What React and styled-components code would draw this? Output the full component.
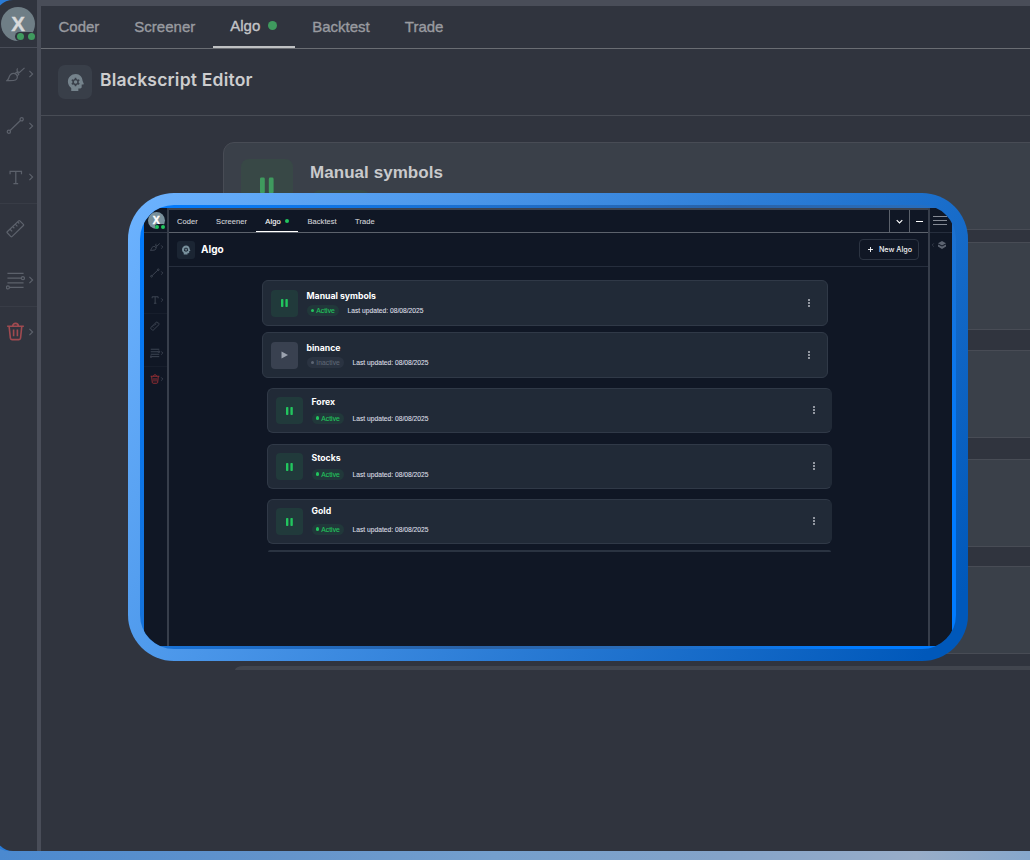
import React from 'react';
import styled, { createGlobalStyle, css } from 'styled-components';

const tabs = ['Coder', 'Screener', 'Algo', 'Backtest', 'Trade'];

const algos = [
  { name: 'Manual symbols', active: true, top: 0, nameTop: 10 },
  { name: 'binance', active: false, top: 6.5, nameTop: 10 },
  { name: 'Forex', active: true, shifted: true, top: 10, nameTop: 8.5 },
  { name: 'Stocks', active: true, shifted: true, top: 10.5, nameTop: 8.5 },
  { name: 'Gold', active: true, shifted: true, top: 9.5, nameTop: 6.5 },
];

const backCards = [12, 20, 21, 19];

const BrushIcon = () => (
  <svg viewBox="0 0 20 20">
    <path d="M.8 16.500C3.500 15 2.500 13 4.300 10.700 6 8.500 9 8.300 10.800 10c1.800 1.800 1.400 4.700-.8 5.800-2.300 1.100-5.700.7-9.200.7z" />
    <path d="M9 9.200 11.300 7.600l2.200 2-1.800 2.200M12.200 3.500c-1.300 1.800-.3 4.500 2 4.300L19.500 3" />
  </svg>
);
const LineIcon = () => (
  <svg viewBox="0 0 20 20">
    <circle cx="16.500" cy="3.500" r="1.700" />
    <circle cx="3" cy="16.500" r="1.700" />
    <path d="M4.300 15.200 15.200 4.700" />
  </svg>
);
const TextIcon = () => (
  <svg viewBox="0 0 20 20">
    <path d="M4.300 6.500V3.500h12v3M10.300 3.500v13M7.800 16.500h5" />
  </svg>
);
const RulerIcon = () => (
  <svg viewBox="0 0 20 20">
    <path d="M1.300 14.500Q.8 14 1.300 13.400L13.300 2q.7-.6 1.300 0l3.700 3.700q.6.600 0 1.200L6.300 18.500q-.6.500-1.200 0zM4.500 11l2 2M7.300 8.300l1.500 1.500M10 5.700l2 2M12.500 3.300l1.500 1.500" />
  </svg>
);
const LinesIcon = () => (
  <svg viewBox="0 0 20 20">
    <path d="M1.500 2.500h17M1.500 7.500h14.500M1.500 12.500h17M3.500 17.300h15" />
    <circle cx="17.800" cy="7.500" r="1.600" />
    <circle cx="2" cy="17.300" r="1.600" />
  </svg>
);
const TrashIcon = () => (
  <svg viewBox="0 0 20 20">
    <path d="M1.200 4.500h17.600M3.300 4.700 4.600 17a1.800 1.800 0 0 0 1.700 1.500h7.300a1.800 1.800 0 0 0 1.700-1.500l1.300-12.300M7 4.500c0-4 6-4 6 0M8 8v7M12 8v7" />
  </svg>
);
const HeadIcon = () => (
  <svg viewBox="0 0 20 20">
    <path
      fillRule="evenodd"
      d="M10.300 1C5.700 1 2 4.500 2 9c0 2.800 1.400 5.200 3.500 6.700V19H13v-2.700h2c1 0 1.500-.6 1.500-1.500v-2.700h1.700c.5 0 .7-.5.4-1L17.500 8.500C17.300 4.200 14.400 1 10.300 1zm-1 4h1.500l.3 1.300 1.200.7 1.300-.4.800 1.300-1 .9v1.400l1 .9-.8 1.300-1.300-.4-1.200.7-.3 1.300H9.300L9 12.700l-1.200-.7-1.300.4-.8-1.300 1-.9V8.800l-1-.9.800-1.300 1.300.4L9 6.300zm.8 2.700a1.800 1.800 0 1 0 0 3.600 1.800 1.800 0 0 0 0-3.600z"
    />
  </svg>
);
const Chevron = ({ dir }) => (
  <svg viewBox="0 0 10 10">
    {dir === 'down' && <path d="M1 3l4 4 4-4" />}
    {dir === 'left' && <path d="M7 1 3 5l4 4" />}
    {!dir && <path d="M3 1l4 4-4 4" />}
  </svg>
);
const PauseIcon = () => (
  <svg viewBox="0 0 14 16">
    <rect x="0" y="0" width="4.800" height="16" rx="1.400" />
    <rect x="8.800" y="0" width="4.800" height="16" rx="1.400" />
  </svg>
);
const PlayIcon = () => (
  <svg viewBox="0 0 14 16">
    <path d="M1 1l13 7-13 7z" />
  </svg>
);

const tools = [
  { id: 'brush', icon: BrushIcon },
  { id: 'line', icon: LineIcon },
  { id: 'text', icon: TextIcon },
  { id: 'ruler', icon: RulerIcon, plain: true, divided: true },
  { id: 'levels', icon: LinesIcon },
  { id: 'trash', icon: TrashIcon, danger: true, divided: true },
];

function Tools({ small }) {
  return (
    <ToolList $small={small}>
      {tools.map(({ id, icon: Icon, plain, danger, divided }) => (
        <Tool key={id} $small={small} $danger={danger} $divided={divided}>
          <Icon />
          {!plain && <ToolArrow $small={small}><Chevron /></ToolArrow>}
        </Tool>
      ))}
    </ToolList>
  );
}

function Brand({ small }) {
  return (
    <BrandBox $small={small}>
      <Avatar $small={small}>
        X
        <Dots $small={small}><i /><i /></Dots>
      </Avatar>
    </BrandBox>
  );
}

function Tabs({ small }) {
  return (
    <TabList $small={small}>
      {tabs.map((tab) => (
        <Tab key={tab} $small={small} $current={tab === 'Algo'}>
          {tab}
          {tab === 'Algo' && <Dot $small={small} />}
        </Tab>
      ))}
    </TabList>
  );
}

function AlgoCard({ algo }) {
  return (
    <Card $top={algo.top} $shifted={algo.shifted}>
      <StateBox $active={algo.active}>{algo.active ? <PauseIcon /> : <PlayIcon />}</StateBox>
      <CardText $top={algo.nameTop}>
        <CardName>{algo.name}</CardName>
        <CardMeta>
          <Pill $active={algo.active}><i />{algo.active ? 'Active' : 'Inactive'}</Pill>
          <span>Last updated: 08/08/2025</span>
        </CardMeta>
      </CardText>
      <More><i /><i /><i /></More>
    </Card>
  );
}

function App() {
  return (
    <Page>
      <GlobalStyle />
      <Backdrop>
        <Rail>
          <Brand />
          <Tools />
        </Rail>
        <Main>
          <Tabs />
          <Header>
            <HeadBox><HeadIcon /></HeadBox>
            <Title>Blackscript Editor</Title>
          </Header>
          <BackList>
            <BackCard>
              <BackState><PauseIcon /></BackState>
              <div>
                <BackName>Manual symbols</BackName>
                <BackPill />
              </div>
            </BackCard>
            {backCards.map((gap, i) => <BackCard key={i} $gap={gap} />)}
            <BackEdge />
          </BackList>
        </Main>
      </Backdrop>
      <Frame>
        <FrameInner>
          <Panel>
            <Rail $small>
              <Brand small />
              <Tools small />
            </Rail>
            <Main>
              <Tabs small />
              <WindowButtons>
                <WindowButton><Chevron dir="down" /></WindowButton>
                <WindowButton><Minus /></WindowButton>
              </WindowButtons>
              <Header $small>
                <HeadBox $small><HeadIcon /></HeadBox>
                <Title $small>Algo</Title>
                <NewButton>
                  <svg viewBox="0 0 10 10"><path d="M5 0v10M0 5h10" /></svg>
                  New Algo
                </NewButton>
              </Header>
              <List>
                {algos.map((algo) => <AlgoCard key={algo.name} algo={algo} />)}
                <ListEdge />
              </List>
            </Main>
            <RightRail>
              <Menu><i /><i /><i /></Menu>
              <Layers>
                <Chevron dir="left" />
                <svg viewBox="0 0 20 20">
                  <path d="M10 0l10 5.500-10 5.500L0 5.500z" />
                  <path d="M0 8.500l10 5 10-5v5L10 20 0 13.500z" />
                </svg>
              </Layers>
            </RightRail>
          </Panel>
        </FrameInner>
      </Frame>
    </Page>
  );
}

const GlobalStyle = createGlobalStyle`
  * { box-sizing: border-box; }
  body {
    margin: 0;
    overflow: hidden;
    font-family: "Liberation Sans", Arial, sans-serif;
  }
  svg { display: block; }
`;

const Page = styled.div`
  position: relative;
  width: 1030px;
  height: 860px;
  overflow: hidden;
  background: linear-gradient(90deg, #4b89cf 0%, #6494cb 28%, #749fcd 48%, #84a3c8 70%, #98adc8 89%, #86a7cc 100%);
`;
const Backdrop = styled.div`
  display: flex;
  width: 1050px;
  height: 851px;
  margin-left: -5px;
  border-radius: 18px 0 0 18px;
  overflow: hidden;
  background: #30343e;
  box-shadow: -4px -4px 0 4px #2a7bd6;
`;
const Rail = styled.div`
  flex: none;
  width: 46px;
  padding-left: 5px;
  border-right: 4px solid #494d58;

  ${({ $small }) => $small && css`
    width: 24.500px;
    padding-left: 0;
    border-right: 2px solid #373e4b;
  `}
`;
const BrandBox = styled.div`
  display: flex;
  height: 48px;
  padding: 7px 0 0 1px;
  border-bottom: 1px solid #494d58;

  ${({ $small }) => $small && css`
    height: 25px;
    padding: 3.500px 0 0 3.500px;
    border-color: #323946;
  `}
`;
const Avatar = styled.div`
  position: relative;
  display: flex;
  align-items: center;
  justify-content: center;
  width: 34px;
  height: 34px;
  border-radius: 50%;
  background: #6f7e86;
  color: #d8d9da;
  font-size: 20.500px;
  font-weight: bold;
  -webkit-text-stroke: .4px currentColor;
  padding-bottom: 1px;

  ${({ $small }) => $small && css`
    width: 17px;
    height: 17px;
    background: #78909c;
    color: #fff;
    font-size: 10.500px;
    padding: 0 0 0 .5px;
  `}
`;
const Dots = styled.span`
  position: absolute;
  right: 0;
  bottom: 0;
  display: flex;
  gap: 4px;
  padding: 1px 0 1px 2px;
  border-radius: 6px;
  background: #30343e;

  i {
    width: 7px;
    height: 7px;
    border-radius: 50%;
    background: #3f9a5e;
  }

  ${({ $small }) => $small && css`
    gap: 1.500px;
    right: -.5px;
    bottom: -.5px;
    padding: .5px;
    background: #101725;
    i { width: 4px; height: 4px; background: #22c55e; }
  `}
`;
const ToolList = styled.div`
  display: flex;
  flex-direction: column;
  height: 309px;

  ${({ $small }) => $small && css`height: 159px;`}
`;
const Tool = styled.div`
  display: flex;
  flex: 1;
  align-items: center;
  padding-left: 6px;
  color: ${({ $danger }) => ($danger ? '#a04a50' : '#5c616b')};
  border-top: 1px solid ${({ $divided }) => ($divided ? '#383c46' : 'transparent')};

  svg {
    width: 19px;
    height: 19px;
    fill: none;
    stroke: currentColor;
    stroke-width: ${({ $danger }) => ($danger ? 1.7 : 1.3)};
  }

  ${({ $small, $danger, $divided }) => $small && css`
    padding-left: 6px;
    color: ${$danger ? '#a83236' : '#454c5a'};
    border-color: ${$divided ? '#171e2c' : 'transparent'};
    svg { width: 10px; height: 10px; stroke-width: 1.700; }
  `}
`;
const ToolArrow = styled.span`
  margin-left: 2px;
  color: #5c616b;

  && svg { width: 8px; height: 8px; stroke-width: 1.500; }

  ${({ $small }) => $small && css`
    margin-left: 0;
    color: #454c5a;
    && svg { width: 4px; height: 4px; stroke-width: 2; }
  `}
`;
const Main = styled.div`
  position: relative;
  flex: 1;
  min-width: 0;
`;
const TabList = styled.div`
  display: flex;
  height: 49px;
  border-top: 6px solid #494d58;
  border-bottom: 1px solid #6a6d73;

  ${({ $small }) => $small && css`
    height: 25px;
    border-top: 2.500px solid #3b424f;
    border-bottom-color: #5c626c;
  `}
`;
const Tab = styled.div`
  display: flex;
  align-items: center;
  height: 42px;
  padding: 0 17.500px;
  font-size: 15px;
  color: #999ba0;
  border-bottom: 2px solid transparent;
  -webkit-text-stroke: .35px currentColor;

  ${({ $current }) => $current && css`
    color: #c3c4c7;
    border-color: #bfc1c3;
    padding-bottom: 2px;
  `}

  ${({ $small, $current }) => $small && css`
    height: 22px;
    padding: ${$current ? '1px' : '2px'} 9.150px 0;
    font-size: 7.500px;
    letter-spacing: .07px;
    color: ${$current ? '#fff' : '#d2d4d8'};
    border-bottom: 1px solid ${$current ? '#fff' : 'transparent'};
    -webkit-text-stroke: .1px currentColor;

    &:first-child { padding-left: 8.500px; }
  `}
`;
const Dot = styled.i`
  width: 9px;
  height: 9px;
  margin-left: 8px;
  border-radius: 50%;
  background: #3f9a5e;

  ${({ $small }) => $small && css`
    width: 4.500px;
    height: 4.500px;
    margin-left: 4px;
    background: #22c55e;
  `}
`;
const WindowButtons = styled.div`
  position: absolute;
  top: 2px;
  right: 0;
  display: flex;
  height: 22px;
`;
const WindowButton = styled.div`
  display: flex;
  align-items: center;
  justify-content: center;
  width: 20px;
  border-left: 1px solid #5c626c;

  &:last-child { width: 19px; }

  svg { width: 7px; height: 7px; fill: none; stroke: #fff; stroke-width: 1.600; }
`;
const Minus = styled.i`
  width: 7px;
  height: 1px;
  background: #fff;
`;
const Header = styled.div`
  display: flex;
  align-items: center;
  height: 67px;
  padding-left: 17px;
  border-bottom: 1.500px solid #484c55;

  ${({ $small }) => $small && css`
    height: 34px;
    padding: 0 9px 0 8.500px;
    border-bottom: 1.500px solid #262e3d;
  `}
`;
const HeadBox = styled.div`
  display: flex;
  align-items: center;
  justify-content: center;
  width: 34px;
  height: 34px;
  border-radius: 7px;
  background: #393f49;

  svg { width: 19px; height: 19px; fill: #75838c; }

  ${({ $small }) => $small && css`
    width: 18px;
    height: 18px;
    border-radius: 3px;
    background: #1b2533;
    svg { width: 10px; height: 10px; fill: #78909c; }
  `}
`;
const Title = styled.h1`
  margin: 0 0 6px 8px;
  font-family: Inter, sans-serif;
  font-size: 17.500px;
  font-weight: 600;
  letter-spacing: .2px;
  color: #cdcdce;
  white-space: nowrap;

  ${({ $small }) => $small && css`
    margin: 0 auto 1px 6px;
    font-size: 10px;
    font-weight: 700;
    letter-spacing: 0;
    color: #fff;
  `}
`;
const NewButton = styled.div`
  display: flex;
  align-items: center;
  justify-content: center;
  gap: 6px;
  width: 60px;
  height: 21px;
  padding-left: 2px;
  border: 1px solid #2c3442;
  border-radius: 4px;
  color: #f1f2f4;
  font-family: Inter, sans-serif;
  font-size: 7.200px;
  font-weight: 500;
  white-space: nowrap;

  svg { width: 5px; height: 5px; fill: none; stroke: #fff; stroke-width: 1.800; }
`;
const BackList = styled.div`
  display: flex;
  flex-direction: column;
  padding: 26px 0 0 182px;
`;
const BackCard = styled.div`
  display: flex;
  flex: none;
  height: 88px;
  margin-top: ${({ $gap }) => $gap || 0}px;
  padding: 16px 17px;
  border: 1.500px solid #484c55;
  border-radius: 11px;
  background: #3a4049;
`;
const BackState = styled.div`
  display: flex;
  align-items: center;
  justify-content: center;
  width: 52px;
  height: 52px;
  margin-right: 17px;
  border-radius: 8px;
  background: #384846;

  svg { width: 14px; height: 17px; fill: #3f9a5e; }
`;
const BackName = styled.div`
  margin-top: 4px;
  font-size: 17px;
  line-height: 20px;
  font-weight: bold;
  letter-spacing: .05px;
  color: #c9cacc;
`;
const BackPill = styled.div`
  width: 62px;
  height: 22px;
  margin-top: 7px;
  border-radius: 11px;
  background: #384846;
`;
const BackEdge = styled.div`
  height: 4px;
  margin: 12px 0 0 12px;
  border-top-left-radius: 8px 4px;
  background: #41454e;
`;

const Frame = styled.div`
  position: absolute;
  left: 128px;
  top: 193px;
  width: 840px;
  height: 467.500px;
  padding: 12px;
  border-radius: 46px;
  background: linear-gradient(121deg, #6db3ff 0%, #0058ba 96%);
`;
const FrameInner = styled.div`
  height: 100%;
  padding: 3px 4px 3px;
  border-radius: 34px;
  overflow: hidden;
  background: linear-gradient(121deg, #007bff 0%, #1b70d0 30%, #2a62a6 55%, #2a6cb8 70%, #007bff 90%);
`;
const Panel = styled.div`
  display: flex;
  height: 100%;
  background: #101725;
`;
const List = styled.div`
  padding: 13px 0 0 93.500px;
`;
const Card = styled.div`
  display: flex;
  width: 566px;
  height: 45.500px;
  margin-top: ${({ $top }) => $top}px;
  padding: 0 17px 0 8px;
  border: 1px solid #303947;
  border-radius: 6px;
  background: #212a37;

  ${({ $shifted }) => $shifted && css`
    width: 565px;
    margin-left: 5px;
    padding-right: 16.500px;
    border-right-color: #212a37;
  `}
`;
const StateBox = styled.div`
  display: flex;
  align-items: center;
  justify-content: center;
  width: 27px;
  height: 27px;
  margin: 8.500px 8.500px 0 0;
  border-radius: 4px;
  background: ${({ $active }) => ($active ? '#213a3b' : '#394150')};

  svg {
    width: 7px;
    height: 8px;
    fill: ${({ $active }) => ($active ? '#22c55e' : '#9ca3af')};
  }
`;
const CardText = styled.div`
  display: flex;
  flex-direction: column;
  justify-content: space-between;
  height: 35px;
  padding-top: ${({ $top }) => $top}px;
`;
const CardName = styled.div`
  font-family: Inter, sans-serif;
  font-size: 8.700px;
  line-height: 11px;
  font-weight: 700;
  color: #fff;
`;
const CardMeta = styled.div`
  display: flex;
  align-items: center;
  gap: 8.500px;
  color: #dcdee2;
  font-size: 6.700px;
  line-height: 11px;
  white-space: nowrap;
  -webkit-text-stroke: .1px currentColor;
`;
const Pill = styled.span`
  display: flex;
  align-items: center;
  gap: 2px;
  height: 11px;
  padding: 0 4.200px;
  border-radius: 6px;
  background: ${({ $active }) => ($active ? '#21383a' : '#2a3341')};
  color: ${({ $active }) => ($active ? '#22c55e' : '#5d6674')};
  letter-spacing: .08px;

  i { width: 3.500px; height: 3.500px; border-radius: 50%; background: currentColor; }
`;
const More = styled.div`
  display: flex;
  flex-direction: column;
  align-self: center;
  gap: 1px;
  margin-left: auto;

  i { width: 2px; height: 2px; border-radius: 50%; background: #b9bdc5; }
`;
const ListEdge = styled.div`
  width: 563px;
  height: 2px;
  margin: 6px 0 0 6px;
  border-radius: 4px 4px 0 0;
  background: #2a3341;
`;
const RightRail = styled.div`
  flex: none;
  width: 24px;
  border-left: 2.500px solid #373e4b;
`;
const Menu = styled.div`
  display: flex;
  flex-direction: column;
  justify-content: center;
  gap: 3px;
  height: 25px;
  padding-left: 3px;
  border-bottom: 1px solid #262e3d;

  i { width: 14px; height: 1px; background: #858a94; }
`;
const Layers = styled.div`
  display: flex;
  align-items: center;
  gap: 3px;
  margin: 8px 0 0 1px;

  svg { width: 8px; height: 8px; fill: #5d6471; }
  svg:first-child { width: 4px; height: 4px; fill: none; stroke: #3d4452; stroke-width: 2; }
`;

export default App;
